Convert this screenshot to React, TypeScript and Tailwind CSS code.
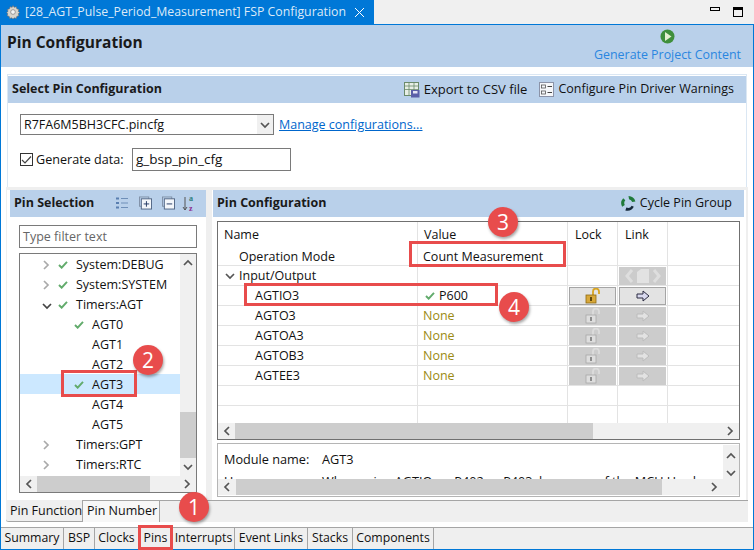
import React from "react";

const Check = () => (
  <svg width="10" height="8" viewBox="0 0 11 9" className="shrink-0">
    <path d="M1 4.500 L4 7.500 L10 1" fill="none" stroke="#62ab6c" strokeWidth="2.200" />
  </svg>
);

const Chevron = ({ dir, color = "#555" }: { dir: "l" | "r" | "u" | "d"; color?: string }) => {
  const d = { l: "M6 1 L2 5 L6 9", r: "M2 1 L6 5 L2 9", u: "M1 6 L5 2 L9 6", d: "M1 3 L5 7 L9 3" }[dir];
  const small = dir === "l" || dir === "r";
  return (
    <svg width={small ? 8 : 10} height={small ? 10 : 9} viewBox={small ? "0 0 8 10" : "0 0 10 9"} className="shrink-0">
      <path d={d} fill="none" stroke={color} strokeWidth="1.700" />
    </svg>
  );
};

const Badge = ({ n, cls }: { n: number; cls: string }) => (
  <div className={`absolute w-[30px] h-[30px] rounded-full bg-[#e84c4c] text-white text-[21px] flex items-center justify-center shadow-[1px_2px_3px_rgba(0,0,0,0.35)] ${cls}`}>
    {n}
  </div>
);

const treeRows = [
  { label: "System:DEBUG", arrow: "r", ok: true },
  { label: "System:SYSTEM", arrow: "r", ok: true },
  { label: "Timers:AGT", arrow: "d", ok: true },
  { label: "AGT0", ok: true, sub: true },
  { label: "AGT1", sub: true },
  { label: "AGT2", sub: true },
  { label: "AGT3", ok: true, sub: true, selected: true },
  { label: "AGT4", sub: true },
  { label: "AGT5", sub: true },
  { label: "Timers:GPT", arrow: "r" },
  { label: "Timers:RTC", arrow: "r" },
];

const TreeRow = ({ row }: { row: (typeof treeRows)[number] }) => (
  <div className={`h-5 flex items-center pt-[2px] ${row.selected ? "bg-[#cce8ff]" : ""}`}>
    <div className="w-[30px] shrink-0 flex justify-end">
      {row.arrow === "r" && <Chevron dir="r" color="#aaa" />}
      {row.arrow === "d" && <span className="-mr-[2px]"><Chevron dir="d" color="#444" /></span>}
    </div>
    <div className={`${row.sub ? "w-[34px]" : "w-[18px]"} shrink-0 flex justify-end`}>{row.ok && <Check />}</div>
    <span className="ml-[8px]">{row.label}</span>
  </div>
);

const Cell = ({ w, children, cls = "" }: { w: string; children?: React.ReactNode; cls?: string }) => (
  <div className={`${w} shrink-0 h-full border-r border-[#e3e3e3] flex items-center ${cls}`}>{children}</div>
);

const LockIcon = ({ on }: { on: boolean }) => (
  <svg width="16" height="16" viewBox="0 0 16 16">
    <path d="M8 7 V3.500 a3 3 0 0 1 6 0 V6" fill="none" stroke={on ? "#d9a521" : "#dcdcdc"} strokeWidth="1.800" />
    <rect x="1" y="7" width="10" height="8" fill={on ? "#d8a83a" : "#dedede"} stroke={on ? "#8f6a12" : "#a8a8a8"} strokeWidth="0.800" />
    <rect x="5" y="9" width="2" height="4" fill={on ? "#5f470c" : "#8c8c8c"} />
  </svg>
);

const ArrowIcon = ({ on }: { on: boolean }) => (
  <svg width="14" height="12" viewBox="0 0 14 12">
    <path d="M1 4 H7 V1 L13 6 L7 11 V8 H1 Z" fill={on ? "#d9d9ee" : "#e2e2e2"} stroke={on ? "#2a2a40" : "#bcbcbc"} strokeWidth="1" />
  </svg>
);

const pinRows = [
  { name: "AGTIO3", value: "P600", ok: true },
  { name: "AGTO3", value: "None" },
  { name: "AGTOA3", value: "None" },
  { name: "AGTOB3", value: "None" },
  { name: "AGTEE3", value: "None" },
];

const HScroll = ({ thumb, cls = "" }: { thumb: string; cls?: string }) => (
  <div className={`h-[16px] bg-[#f0f0f0] flex items-center justify-between px-[5px] relative shrink-0 ${cls}`}>
    <Chevron dir="l" />
    <div className={`absolute top-0 bottom-0 bg-[#cdcdcd] ${thumb}`} />
    <Chevron dir="r" />
  </div>
);

const bottomTabs = [
  { label: "Summary", w: "w-[63px]" },
  { label: "BSP", w: "w-[31px]" },
  { label: "Clocks", w: "w-[44px]" },
  { label: "Pins", w: "w-[34px]" },
  { label: "Interrupts", w: "w-[62px]" },
  { label: "Event Links", w: "w-[73px]" },
  { label: "Stacks", w: "w-[45px]" },
  { label: "Components", w: "w-[81px]" },
];

export default function App() {
  return (
    <div className="relative w-[754px] h-[550px] overflow-hidden bg-[#f0f0f0] font-['Open_Sans','Noto_Sans',sans-serif] text-[12.5px] leading-none text-[#111]">
      {/* editor tab strip */}
      <div className="h-6 flex bg-[#f0f0f0]">
        <div className="w-[374px] bg-[#0078d7] text-white flex items-center pl-[6px]">
          <svg width="14" height="14" viewBox="0 0 24 24" className="shrink-0">
            <path d="M12 1 l2 3 3.500-1 1 3.500 3.500 1-1 3.500 2.500 2-2.500 2 1 3.500-3.500 1-1 3.500-3.500-1-2 2.500-2-2.500-3.500 1-1-3.500-3.500-1 1-3.500L1 13l2.500-2-1-3.500 3.500-1 1-3.500 3.500 1z" fill="#d8d4cc" stroke="#6a6a6a" strokeWidth="1" />
            <circle cx="12" cy="12" r="4" fill="#f5f5f5" stroke="#6a6a6a" />
          </svg>
          <span className="ml-[5px] text-[12.3px] text-[#dceaf7] whitespace-nowrap">[28_AGT_Pulse_Period_Measurement] FSP Configuration</span>
          <svg width="9" height="9" viewBox="0 0 9 9" className="ml-[9px]">
            <path d="M0 0 L9 9 M9 0 L0 9" stroke="#fff" strokeWidth="1" />
          </svg>
        </div>
        <div className="flex-1 flex items-start justify-end pt-[7px] pr-[11px] gap-[13px]">
          <div className="w-[10px] h-[4px] border border-black" />
          <div className="w-[10px] h-[10px] border border-black border-t-[3px]" />
        </div>
      </div>

      <div className="h-[526px] bg-white border-x border-t border-b border-[#0078d7] flex flex-col">
        {/* page header */}
        <div className="h-[42px] bg-[#b9d0ea] flex justify-between shrink-0">
          <div className="pl-[6px] pt-[10px] font-bold text-[15.500px] text-[#1a1a1a]">Pin Configuration</div>
          <div className="pr-[12px] pt-[4px] flex flex-col items-center">
            <svg width="15" height="15" viewBox="0 0 15 15">
              <circle cx="7.500" cy="7.500" r="7" fill="#3f8f3c" />
              <path d="M5 3 L11.500 7.500 L5 12 Z" fill="#e4f0d0" />
            </svg>
            <span className="text-[12.400px] text-[#2a86e0] mt-[5px]">Generate Project Content</span>
          </div>
        </div>

        {/* select pin configuration */}
        <div className="h-[120px] pt-[7px] px-[6px] shrink-0">
          <div className="h-full border border-b-0 border-[#dbe7f3] pt-[1px]">
            <div className="h-[27px] bg-[#b9d0ea] flex items-center justify-between pl-[4px] pr-[12px]">
              <span className="font-bold text-[#1a1a1a]">Select Pin Configuration</span>
              <div className="flex items-center">
                <svg width="16" height="16" viewBox="0 0 16 16" className="mr-[4px]">
                  <rect x="0.500" y="0.500" width="14" height="13" fill="#e8efe6" stroke="#6b8a6b" />
                  <path d="M0 4 H15 M0 7.500 H15 M5 0 V14 M10 0 V14" stroke="#6b8a6b" strokeWidth="0.800" />
                  <rect x="7" y="8" width="8.500" height="7.500" fill="#5a5fa8" />
                  <rect x="9" y="9" width="4.500" height="2.500" fill="#e5e5f5" />
                </svg>
                <span className="text-[13px] -mt-[1px]">Export to CSV file</span>
                <svg width="15" height="15" viewBox="0 0 15 15" className="ml-[12px] mr-[4px]">
                  <rect x="0.500" y="0.500" width="14" height="14" fill="#f5f7fa" stroke="#8b93a8" />
                  <rect x="2.500" y="3" width="4" height="3" fill="none" stroke="#555" strokeWidth="0.800" />
                  <rect x="2.500" y="9" width="4" height="3" fill="none" stroke="#555" strokeWidth="0.800" />
                  <path d="M8.500 4.500 H13 M8.500 10.500 H13" stroke="#444" strokeWidth="1" />
                </svg>
                <span>Configure Pin Driver Warnings</span>
              </div>
            </div>
            <div className="pl-[12px] pt-[11px] flex items-center">
              <div className="w-[254px] h-[21px] border border-[#7a7a7a] flex items-center justify-between pl-[3px]">
                <span className="pt-[1px]">R7FA6M5BH3CFC.pincfg</span>
                <div className="w-[16px] h-full bg-[#f0f0f0] flex items-center justify-center">
                  <Chevron dir="d" color="#555" />
                </div>
              </div>
              <span className="ml-[5px] mt-[2px] text-[#0066cc] underline">Manage configurations...</span>
            </div>
            <div className="pl-[12px] pt-[13px] flex items-center">
              <div className="w-[13px] h-[13px] border border-[#333] bg-white flex items-center justify-center">
                <svg width="11" height="10" viewBox="0 0 11 10">
                  <path d="M1 5 L4 8 L10 1.500" fill="none" stroke="#444" strokeWidth="1.200" />
                </svg>
              </div>
              <span className="ml-[3px] w-[86px] text-[12.600px] whitespace-nowrap pt-[1px]">Generate data:</span>
              <div className="ml-[10px] w-[159px] h-[23px] border border-[#7a7a7a] flex items-center pl-[3px] pt-[1px] text-[13.500px]">g_bsp_pin_cfg</div>
            </div>
          </div>
        </div>

        {/* two panels */}
        <div className="ml-[5px] w-[742px] h-[313px] bg-[#efefef] pt-[3px] flex shrink-0">
          <div className="ml-[1px] w-[199px] h-[310px] bg-white shrink-0 flex flex-col">
            <div className="ml-[3px] h-[27px] bg-[#b9d0ea] flex items-center pl-[4px] pb-[1px] shrink-0">
              <span className="font-bold text-[#1a1a1a] w-[80px] whitespace-nowrap">Pin Selection</span>
              <svg width="12" height="14" viewBox="0 0 12 14" className="ml-[22px]">
                <path d="M0 2.500 H3 M0 7 H3 M0 11.500 H3" stroke="#5a7fb0" strokeWidth="2" />
                <path d="M5 2.500 H12 M5 7 H12 M5 11.500 H12" stroke="#6f8fb8" strokeWidth="1" />
              </svg>
              <svg width="13" height="14" viewBox="0 0 14 14" className="ml-[11px]">
                <rect x="0.500" y="0.500" width="10" height="10" fill="none" stroke="#7f8fa5" />
                <rect x="2.500" y="2.500" width="11" height="11" fill="#f3f6fa" stroke="#4f6483" />
                <path d="M5 8 H11 M8 5 V11" stroke="#1f3560" strokeWidth="1" />
              </svg>
              <svg width="13" height="14" viewBox="0 0 14 14" className="ml-[10px]">
                <rect x="0.500" y="0.500" width="10" height="10" fill="none" stroke="#7f8fa5" />
                <rect x="2.500" y="2.500" width="11" height="11" fill="#f3f6fa" stroke="#4f6483" />
                <path d="M5 8 H11" stroke="#1f3560" strokeWidth="1" />
              </svg>
              <svg width="17" height="20" viewBox="0 0 17 20" className="ml-[7px]">
                <path d="M3 4 V17 M1 14 L3 17 L5 14" fill="none" stroke="#555" strokeWidth="1" />
                <text x="7" y="8" fontSize="8" fontWeight="700" fill="#2d7d7a" fontFamily="Liberation Serif, serif">a</text>
                <text x="7" y="18" fontSize="8" fontWeight="700" fill="#8a2d8f" fontFamily="Liberation Serif, serif">z</text>
              </svg>
            </div>
            <div className="ml-[12px] w-[178px] mt-[8px] h-[23px] border border-[#7a7a7a] flex items-center pl-[3px] pt-[2px] text-[#666] shrink-0">Type filter text</div>
            <div className="ml-[12px] w-[178px] mt-[5px] h-[240px] border border-[#7a7a7a] shrink-0 flex flex-col">
              <div className="h-[222px] flex">
                <div className="w-[160px]">
                  {treeRows.map((r) => (
                    <TreeRow key={r.label} row={r} />
                  ))}
                </div>
                <div className="w-[16px] bg-[#f0f0f0] flex flex-col items-center justify-between py-[5px] relative">
                  <Chevron dir="u" />
                  <div className="absolute left-0 right-0 top-[158px] h-[46px] bg-[#cdcdcd]" />
                  <Chevron dir="d" />
                </div>
              </div>
              <HScroll thumb="left-[17px] w-[113px]" />
            </div>
          </div>

          <div className="ml-[6px] w-[534px] h-[310px] bg-white shrink-0 flex flex-col">
            <div className="ml-[1px] mr-[2px] h-[27px] bg-[#b9d0ea] flex items-center justify-between pl-[4px] pr-[12px] pb-[1px] shrink-0">
              <span className="font-bold text-[#1a1a1a]">Pin Configuration</span>
              <div className="flex items-center">
                <svg width="17" height="17" viewBox="0 0 16 16" className="mr-[3px]">
                  <path d="M8 1 A7 7 0 0 1 14.500 6 L11.500 6.500 A4 4 0 0 0 8.500 4 Z" fill="#1f7a3a" />
                  <path d="M13 11 A7 7 0 0 1 5 14.500 L6 11.800 A4 4 0 0 0 11 10 Z" fill="#16283a" />
                  <path d="M2 11 A7 7 0 0 1 3 3 L5 5 A4 4 0 0 0 4.500 9.500 Z" fill="#1f7a3a" />
                </svg>
                <span>Cycle Pin Group</span>
              </div>
            </div>
            <div className="ml-[5px] w-[523px] mt-[4px] h-[219px] border border-[#707070] shrink-0 flex flex-col">
              <div className="flex h-[44px] border-b border-[#e3e3e3] shrink-0">
                <Cell w="w-[200px]" cls="flex-col !items-start pl-[6px]">
                  <span className="mt-[7px]">Name</span>
                  <span className="mt-[9px] ml-[15px]">Operation Mode</span>
                </Cell>
                <Cell w="w-[150px]" cls="flex-col !items-start pl-[6px]">
                  <span className="mt-[7px]">Value</span>
                  <span className="mt-[9px] -ml-[1px]">Count Measurement</span>
                </Cell>
                <Cell w="w-[50px]" cls="flex-col !items-start pl-[7px]">
                  <span className="mt-[7px]">Lock</span>
                </Cell>
                <Cell w="w-[50px]" cls="flex-col !items-start pl-[7px]">
                  <span className="mt-[7px]">Link</span>
                </Cell>
              </div>
              <div className="flex h-[20px] border-b border-[#e3e3e3] shrink-0">
                <Cell w="w-[200px]" cls="pl-[7px]">
                  <Chevron dir="d" color="#555" />
                  <span className="ml-[4px] mt-[2px]">Input/Output</span>
                </Cell>
                <Cell w="w-[150px]" />
                <Cell w="w-[50px]" />
                <Cell w="w-[50px]" cls="justify-center">
                  <div className="w-[47px] h-[18px] bg-[#cccccc] flex items-center justify-center">
                    <svg width="36" height="16" viewBox="0 0 36 16">
                      <path d="M7 2 L2 8 L7 14 M29 2 L34 8 L29 14" fill="none" stroke="#dedede" strokeWidth="3" />
                      <path d="M12 4 L16 1 H24 V15 H12 Z" fill="#e2e2e2" />
                    </svg>
                  </div>
                </Cell>
              </div>
              {pinRows.map((r) => (
                <div key={r.name} className="flex h-[20px] border-b border-[#e3e3e3] shrink-0">
                  <Cell w="w-[200px]" cls="pl-[37px]"><span className="mt-[2px]">{r.name}</span></Cell>
                  <Cell w="w-[150px]" cls="pl-[7px]">
                    {r.ok ? (
                      <>
                        <Check />
                        <span className="ml-[4px] mt-[2px]">{r.value}</span>
                      </>
                    ) : (
                      <span className="-ml-[2px] mt-[2px] text-[#9b8a14]">{r.value}</span>
                    )}
                  </Cell>
                  <Cell w="w-[50px]" cls="justify-center">
                    <div className={`w-[47px] h-[18px] flex items-center justify-center border ${r.ok ? "bg-[#e3e3e3] border-[#a5a5a5]" : "bg-[#cccccc] border-[#cccccc]"}`}>
                      <LockIcon on={!!r.ok} />
                    </div>
                  </Cell>
                  <Cell w="w-[50px]" cls="justify-center">
                    <div className={`w-[47px] h-[18px] flex items-center justify-center border ${r.ok ? "bg-[#e3e3e3] border-[#a5a5a5]" : "bg-[#cccccc] border-[#cccccc]"}`}>
                      <ArrowIcon on={!!r.ok} />
                    </div>
                  </Cell>
                </div>
              ))}
              <div className="flex h-[20px] border-b border-[#e3e3e3] shrink-0">
                <Cell w="w-[200px]" /><Cell w="w-[150px]" /><Cell w="w-[50px]" /><Cell w="w-[50px]" />
              </div>
              <div className="flex flex-1">
                <Cell w="w-[200px]" /><Cell w="w-[150px]" /><Cell w="w-[50px]" /><Cell w="w-[50px]" />
              </div>
              <HScroll thumb="left-[17px] w-[358px]" />
            </div>
            <div className="ml-[5px] w-[523px] mt-[3px] h-[54px] border border-[#b5b5b5] shrink-0 relative overflow-hidden">
              <div className="flex items-center pl-[6px] pt-[9px]">
                <span className="w-[98px] text-[12.700px] whitespace-nowrap">Module name:</span>
                <span className="text-[12.700px]">AGT3</span>
              </div>
              <div className="flex pl-[6px] pt-[9px] whitespace-nowrap text-[12.700px]">
                <span className="w-[98px]">Usage:</span>
                <span>When using AGTIO on P402 or P403, be aware of the MCU Hardware</span>
              </div>
              <div className="absolute right-0 top-[1px] bottom-[1px] w-[16px] bg-[#f0f0f0] flex flex-col items-center pt-[7px] gap-[7px]">
                <Chevron dir="u" />
                <Chevron dir="d" />
              </div>
              <HScroll thumb="left-[18px] w-[426px]" cls="!absolute left-0 right-[16px] bottom-[1px]" />
            </div>
          </div>
        </div>

        {/* inner tabs */}
        <div className="ml-[5px] w-[742px] h-[22px] bg-[#efefef] flex shrink-0">
          <div className="w-[76px] flex items-center pl-[4px] pt-[2px] border-b border-[#a5a5a5] rounded-bl-[3px] whitespace-nowrap">Pin Function</div>
          <div className="w-[78px] flex items-center pl-[4px] bg-[#f7f7f7] border-x border-t border-[#a5a5a5] whitespace-nowrap">Pin Number</div>
          <div className="flex-1 border-t border-[#a5a5a5]" />
        </div>

        {/* bottom tabs */}
        <div className="mt-[5px] flex-1 flex bg-[#efefef] border-t border-[#a5a5a5] text-[12.300px]">
          {bottomTabs.map((t) => (
            <div key={t.label} className={`${t.w} flex items-center justify-center pb-[1px] border-r border-[#a5a5a5] whitespace-nowrap`}>{t.label}</div>
          ))}
        </div>
      </div>

      {/* annotations */}
      <div className="absolute left-[61px] top-[370px] w-[76px] h-[27px] border-[3px] border-[#e84c4c]" />
      <div className="absolute left-[138px] top-[525px] w-[35px] h-[25px] border-[3px] border-[#e84c4c]" />
      <div className="absolute left-[409px] top-[241px] w-[157px] h-[26px] border-[3px] border-[#e84c4c]" />
      <div className="absolute left-[244px] top-[283px] w-[254px] h-[23px] border-[3px] border-[#e84c4c]" />
      <Badge n={1} cls="left-[179px] top-[492px]" />
      <Badge n={2} cls="left-[133px] top-[345px]" />
      <Badge n={3} cls="left-[488px] top-[207px]" />
      <Badge n={4} cls="left-[499px] top-[292px]" />
    </div>
  );
}
